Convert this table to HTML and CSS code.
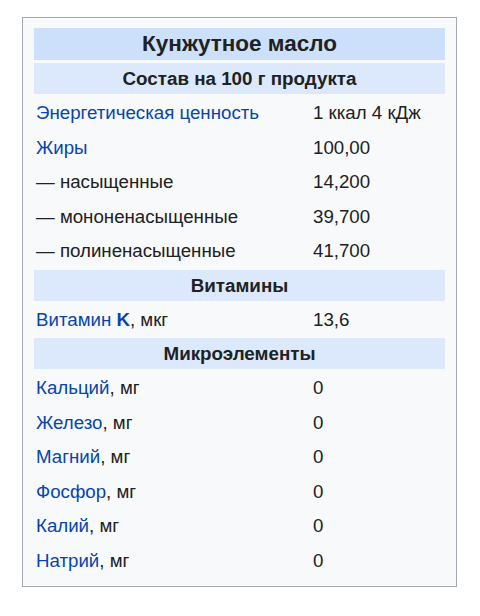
FILE: index.html
```html
<!DOCTYPE html>
<html lang="ru">
<head>
<meta charset="utf-8">
<title>Кунжутное масло</title>
<link rel="stylesheet" href="styles.css">
</head>
<body>
<div class="page">
<table class="infobox">
  <colgroup><col class="col-label"><col class="col-value"></colgroup>
  <tbody>
    <tr><th colspan="2" class="title">Кунжутное масло</th></tr>
    <tr><th colspan="2" class="section">Состав на 100 г продукта</th></tr>
    <tr><td><a href="#">Энергетическая ценность</a></td><td>1 ккал 4 кДж</td></tr>
    <tr><td><a href="#">Жиры</a></td><td>100,00</td></tr>
    <tr><td>— насыщенные</td><td>14,200</td></tr>
    <tr><td>— мононенасыщенные</td><td>39,700</td></tr>
    <tr><td>— полиненасыщенные</td><td>41,700</td></tr>
    <tr><th colspan="2" class="section">Витамины</th></tr>
    <tr><td><a href="#">Витамин <b>K</b></a>, мкг</td><td>13,6</td></tr>
    <tr><th colspan="2" class="section">Микроэлементы</th></tr>
    <tr><td><a href="#">Кальций</a>, мг</td><td>0</td></tr>
    <tr><td><a href="#">Железо</a>, мг</td><td>0</td></tr>
    <tr><td><a href="#">Магний</a>, мг</td><td>0</td></tr>
    <tr><td><a href="#">Фосфор</a>, мг</td><td>0</td></tr>
    <tr><td><a href="#">Калий</a>, мг</td><td>0</td></tr>
    <tr><td><a href="#">Натрий</a>, мг</td><td>0</td></tr>
  </tbody>
</table>
</div>
</body>
</html>
```
FILE: styles.css
```css
html, body {
  margin: 0;
  padding: 0;
  background: #ffffff;
}
.page {
  padding: 17px 22px;
  font-family: "Liberation Sans", Arial, sans-serif;
  color: #202122;
}
.infobox {
  width: 435px;
  box-sizing: border-box;
  border: 1px solid #a2a9b1;
  background: #f8f9fa;
  border-spacing: 3px;
  padding: 7px 8px;
  table-layout: fixed;
  font-size: 18.7px;
  line-height: 25.5px;
}
.col-label { width: 274px; }
.infobox td {
  padding: 3px 2px;
  vertical-align: middle;
  text-align: left;
}
.infobox a {
  color: #0645ad;
  text-decoration: none;
}
.infobox a b {
  font-weight: bold;
}
.title {
  background: #cde0fb;
  font-size: 22.5px;
  font-weight: bold;
  text-align: center;
  padding: 3px 2px;
  line-height: 26px;
}
.section {
  background: #dce9fd;
  font-size: 18.8px;
  font-weight: bold;
  text-align: center;
  padding: 3px 2px;
  line-height: 25px;
}
```
